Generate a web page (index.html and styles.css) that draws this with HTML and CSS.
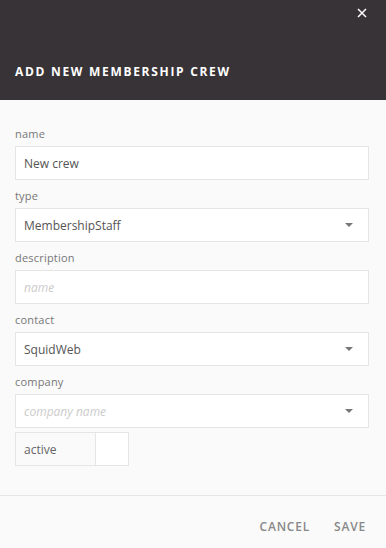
FILE: index.html
```html
<!DOCTYPE html>
<html>
<head>
<meta charset="utf-8">
<link rel="stylesheet" href="styles.css">
</head>
<body>
<div class="dialog">
  <header class="head">
    <div class="close-row">
      <svg class="close" width="10" height="10" viewBox="0 0 10 10"><path d="M1 1L9 9M9 1L1 9" stroke="#fff" stroke-width="1.5" fill="none"/></svg>
    </div>
    <h1 class="title">ADD NEW MEMBERSHIP CREW</h1>
  </header>
  <main class="body">
    <div class="field">
      <label class="label">name</label>
      <div class="box"><span class="value">New crew</span></div>
    </div>
    <div class="field">
      <label class="label">type</label>
      <div class="box"><span class="value">MembershipStaff</span><span class="caret"></span></div>
    </div>
    <div class="field">
      <label class="label">description</label>
      <div class="box"><span class="placeholder">name</span></div>
    </div>
    <div class="field">
      <label class="label">contact</label>
      <div class="box"><span class="value">SquidWeb</span><span class="caret"></span></div>
    </div>
    <div class="field">
      <label class="label">company</label>
      <div class="box"><span class="placeholder">company name</span><span class="caret"></span></div>
    </div>
    <div class="check">
      <span class="check-label">active</span>
      <span class="check-box"></span>
    </div>
  </main>
  <footer class="foot">
    <button class="btn">CANCEL</button>
    <button class="btn">SAVE</button>
  </footer>
</div>
</body>
</html>
```

FILE: styles.css
```css
* { box-sizing: border-box; }
html, body { margin: 0; padding: 0; }
body {
  background: #fafafa;
  font-family: "Open Sans", "Noto Sans", sans-serif;
  width: 386px;
  height: 548px;
  overflow: hidden;
}
.dialog { display: flex; flex-direction: column; height: 548px; }
.head {
  background: #383336;
  height: 100px;
  padding: 0 15px;
  display: flex;
  flex-direction: column;
}
.close-row {
  display: flex;
  justify-content: flex-end;
  padding-top: 8px;
  padding-right: 4px;
  height: 56px;
}
.close { display: block; }
.title {
  margin: 0;
  color: #fff;
  font-size: 12px;
  font-weight: 700;
  letter-spacing: 1.7px;
  line-height: 16px;
  padding-top: 8px;
}
.body {
  padding: 27px 17px 0 15px;
  display: flex;
  flex-direction: column;
  gap: 9px;
  flex: 1;
}
.field { display: flex; flex-direction: column; }
.label {
  font-size: 11px;
  color: #777;
  line-height: 14px;
  margin-bottom: 5px;
  letter-spacing: 0.2px;
}
.box {
  height: 34px;
  background: #fff;
  border: 1px solid #e6e6e6;
  display: flex;
  align-items: center;
  justify-content: space-between;
  padding: 0 15px 0 8px;
}
.value { font-size: 12px; color: #555; }
.placeholder { font-size: 12px; color: #ccc; font-style: italic; }
.caret {
  width: 0; height: 0;
  border-left: 4px solid transparent;
  border-right: 4px solid transparent;
  border-top: 4px solid #777;
}
.check {
  display: flex;
  width: 114px;
  height: 34px;
  border: 1px solid #e6e6e6;
  margin-top: -5px;
}
.check-label {
  width: 80px;
  font-size: 12px;
  color: #666;
  display: flex;
  align-items: center;
  padding-left: 8px;
  border-right: 1px solid #e6e6e6;
}
.check-box { flex: 1; background: #fff; }
.foot {
  border-top: 1px solid #e6e6e6;
  height: 53px;
  display: flex;
  justify-content: flex-end;
  align-items: flex-start;
  gap: 24px;
  padding: 23px 20px 0 0;
}
.btn {
  background: none;
  border: none;
  padding: 0;
  font-family: inherit;
  font-size: 12px;
  line-height: 16px;
  font-weight: 600;
  color: #888;
  letter-spacing: 0.8px;
}
```
